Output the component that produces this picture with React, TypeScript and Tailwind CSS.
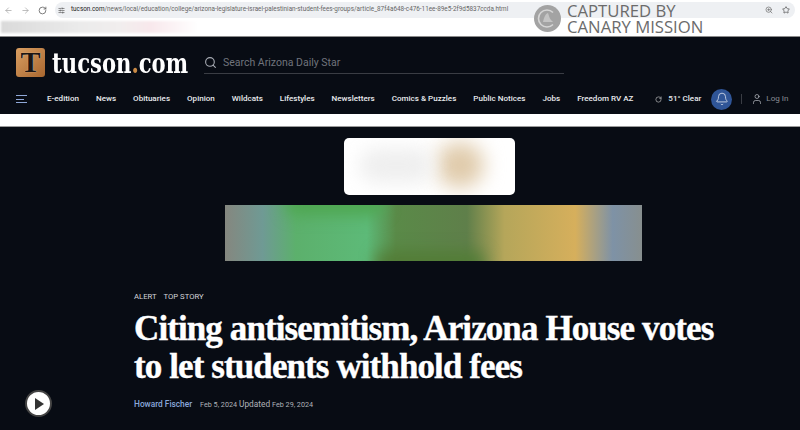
import { Bell, Search, Star, User, ZoomIn, RotateCw, ArrowLeft, ArrowRight, SlidersHorizontal } from "lucide-react";

const navItems = ["E-edition", "News", "Obituaries", "Opinion", "Wildcats", "Lifestyles", "Newsletters", "Comics & Puzzles", "Public Notices", "Jobs", "Freedom RV AZ"];

const BrowserBar = () => (
  <div className="relative h-[37px] bg-white border-b border-[#8a8a8a]">
    <div className="flex h-[20px] items-center pl-[4px] pr-[5px]">
      <ArrowLeft size={9} className="shrink-0 text-[#a8a8a8]" />
      <ArrowRight size={9} className="ml-[8px] shrink-0 text-[#a8a8a8]" />
      <RotateCw size={9} className="ml-[8px] shrink-0 text-[#555]" />
      <div className="ml-[8px] flex h-[16px] flex-1 items-center rounded-full bg-[#eef0f3] pl-[3px] pr-[5px]">
        <SlidersHorizontal size={7} className="shrink-0 text-[#444]" />
        <span className="ml-[6px] font-['Roboto'] text-[6.35px] text-[#666] whitespace-nowrap">
          <span className="text-[#222]">tucson.com</span>/news/local/education/college/arizona-legislature-israel-palestinian-student-fees-groups/article_87f4a648-c476-11ee-89e5-2f9d5837ccda.html
        </span>
        <div className="flex-1" />
        <ZoomIn size={8} className="shrink-0 text-[#666]" />
        <Star size={8} className="ml-[9px] shrink-0 text-[#444]" />
      </div>
    </div>
    <div className="ml-px mt-px h-[12px] w-[197px] blur-[1px] bg-[linear-gradient(90deg,#dadada,#ebebeb_40%,#f1eeee_60%,#f8e8ec_76%,#ffffff)]" />
    <div className="absolute left-[534px] top-[3px] flex items-start">
      <svg width="27" height="27" viewBox="0 0 27 27" className="mt-[2px]">
        <circle cx="13.5" cy="13.5" r="13.5" fill="#a3a3a3" />
        <path d="M19 7.5a8.5 8.5 0 1 0 0 12" fill="none" stroke="#d6d6d6" strokeWidth="1.6" />
        <path d="M9 17c1-4 2-8 5-9 1 2 1 5 3 7l2 2z" fill="#c4c4c4" />
      </svg>
      <div className="ml-[6px] text-[16.7px] leading-[16px] text-[#6b6b6b] whitespace-nowrap">
        CAPTURED BY
        <br />
        CANARY MISSION
      </div>
    </div>
  </div>
);

const SiteHeader = () => (
  <div className="bg-[#080c14] h-[77px]">
    <div className="flex h-[50px] items-center pl-[16px]">
      <div className="flex h-[29px] w-[29px] items-center justify-center rounded-[3px] bg-gradient-to-br from-[#d99f62] to-[#a8672f] font-['Liberation_Serif'] text-[30px] font-bold leading-none text-[#1b1512] [text-shadow:0_0_1px_#f0e2cc]">
        T
      </div>
      <div className="ml-[7px] mt-[3px] w-[135px] whitespace-nowrap font-['DejaVu_Serif'] text-[28px] font-bold leading-none text-white origin-left scale-x-[0.755]">
        tucson<span className="text-[#c98a45]">.</span>com
      </div>
      <div className="ml-[17px] mt-[15px] flex h-[22px] w-[360px] items-center self-start border-b border-[#3a3d44]">
        <Search size={13} className="shrink-0 text-[#a9adb5]" />
        <span className="ml-[6px] font-['Roboto'] text-[10.5px] text-[#70747c]">Search Arizona Daily Star</span>
      </div>
    </div>
    <div className="flex h-[24px] items-center pl-[16px] font-['Roboto'] text-[8.05px] font-medium text-[#e9ebee] whitespace-nowrap">
      <div className="flex w-[11px] shrink-0 flex-col gap-[2.5px]">
        <div className="h-px w-[11px] bg-[#8fa8d8]" />
        <div className="h-px w-[8px] bg-[#8fa8d8]" />
        <div className="h-px w-[11px] bg-[#8fa8d8]" />
      </div>
      <div className="ml-[20px] flex gap-[17px]">
        {navItems.map((item) => (
          <span key={item}>{item}</span>
        ))}
      </div>
      <RotateCw size={7} className="ml-[22px] shrink-0 text-[#d8d8d8]" />
      <span className="ml-[6px]">51° Clear</span>
      <div className="ml-[10px] flex h-[21px] w-[21px] shrink-0 items-center justify-center rounded-full bg-[#2f5597]">
        <Bell size={14} className="text-[#e8ecf4]" strokeWidth={1.3} />
      </div>
      <div className="ml-[9px] h-[10px] w-px shrink-0 bg-[#3a3d44]" />
      <User size={12} className="ml-[9px] shrink-0 text-[#c9ccd2]" strokeWidth={1.3} />
      <span className="ml-[3px] font-normal text-[#8a8d94]">Log In</span>
    </div>
  </div>
);

const Article = () => (
  <div className="relative h-[303px] bg-[#080c14]">
    <div className="pt-[11px]">
      <div className="relative ml-[344px] h-[57px] w-[171px] overflow-hidden rounded-[5px] bg-white">
        <div className="absolute left-[92px] top-[4px] h-[46px] w-[48px] rounded-full bg-[#e0cbab] blur-[10px]" />
        <div className="absolute left-[15px] top-[10px] h-[35px] w-[75px] rounded-full bg-[#efefef] blur-[9px]" />
      </div>
      <div className="relative ml-[225px] mt-[10px] h-[56px] w-[417px] overflow-hidden bg-[linear-gradient(90deg,#85877f_0%,#6f9a94_9%,#5cb06c_17%,#5dba78_34%,#5a8a48_41%,#5f7f4a_58%,#b5a65a_67%,#d6af5c_84%,#7e92a6_93%,#878f8f_100%)]">
        <div className="absolute left-[60px] top-[-14px] h-[24px] w-[100px] rounded-full bg-[#4ea650] blur-[8px]" />
        <div className="absolute left-[150px] bottom-[-14px] h-[24px] w-[110px] rounded-full bg-[#527c36] blur-[8px]" />
      </div>
    </div>
    <div className="pl-[134px] pt-[30px]">
      <div className="flex gap-[7px] font-['Roboto'] text-[7.7px] leading-[12px] text-[#d4d6da]">
        <span>ALERT</span>
        <span>TOP STORY</span>
      </div>
      <h1 className="mt-[7px] font-['Liberation_Serif'] text-[35px] font-bold leading-[38px] tracking-[-0.9px] text-white whitespace-nowrap [-webkit-text-stroke:0.4px_white]">
        Citing antisemitism, Arizona House votes
        <br />
        to let students withhold fees
      </h1>
      <div className="mt-[12px] flex items-baseline font-['Roboto'] text-[7.2px] text-[#b0b3b9]">
        <span className="text-[8.3px] font-medium text-[#8aa9dc]">Howard Fischer</span>
        <span className="ml-[8px]">Feb 5, 2024</span>
        <span className="ml-[2px] text-[8.3px]">Updated</span>
        <span className="ml-[2px]">Feb 29, 2024</span>
      </div>
    </div>
    <div className="absolute left-[25px] bottom-[13px] flex h-[27px] w-[27px] items-center justify-center rounded-full border-2 border-[#444] bg-white">
      <div className="ml-[2px] h-0 w-0 border-y-[6px] border-l-[9px] border-y-transparent border-l-[#333]" />
    </div>
  </div>
);

export default function App() {
  return (
    <div className="h-[430px] w-[800px] overflow-hidden bg-white font-['Open_Sans',sans-serif]">
      <BrowserBar />
      <SiteHeader />
      <div className="h-[13px] bg-white border-b border-[#9a9a9a]" />
      <Article />
    </div>
  );
}
